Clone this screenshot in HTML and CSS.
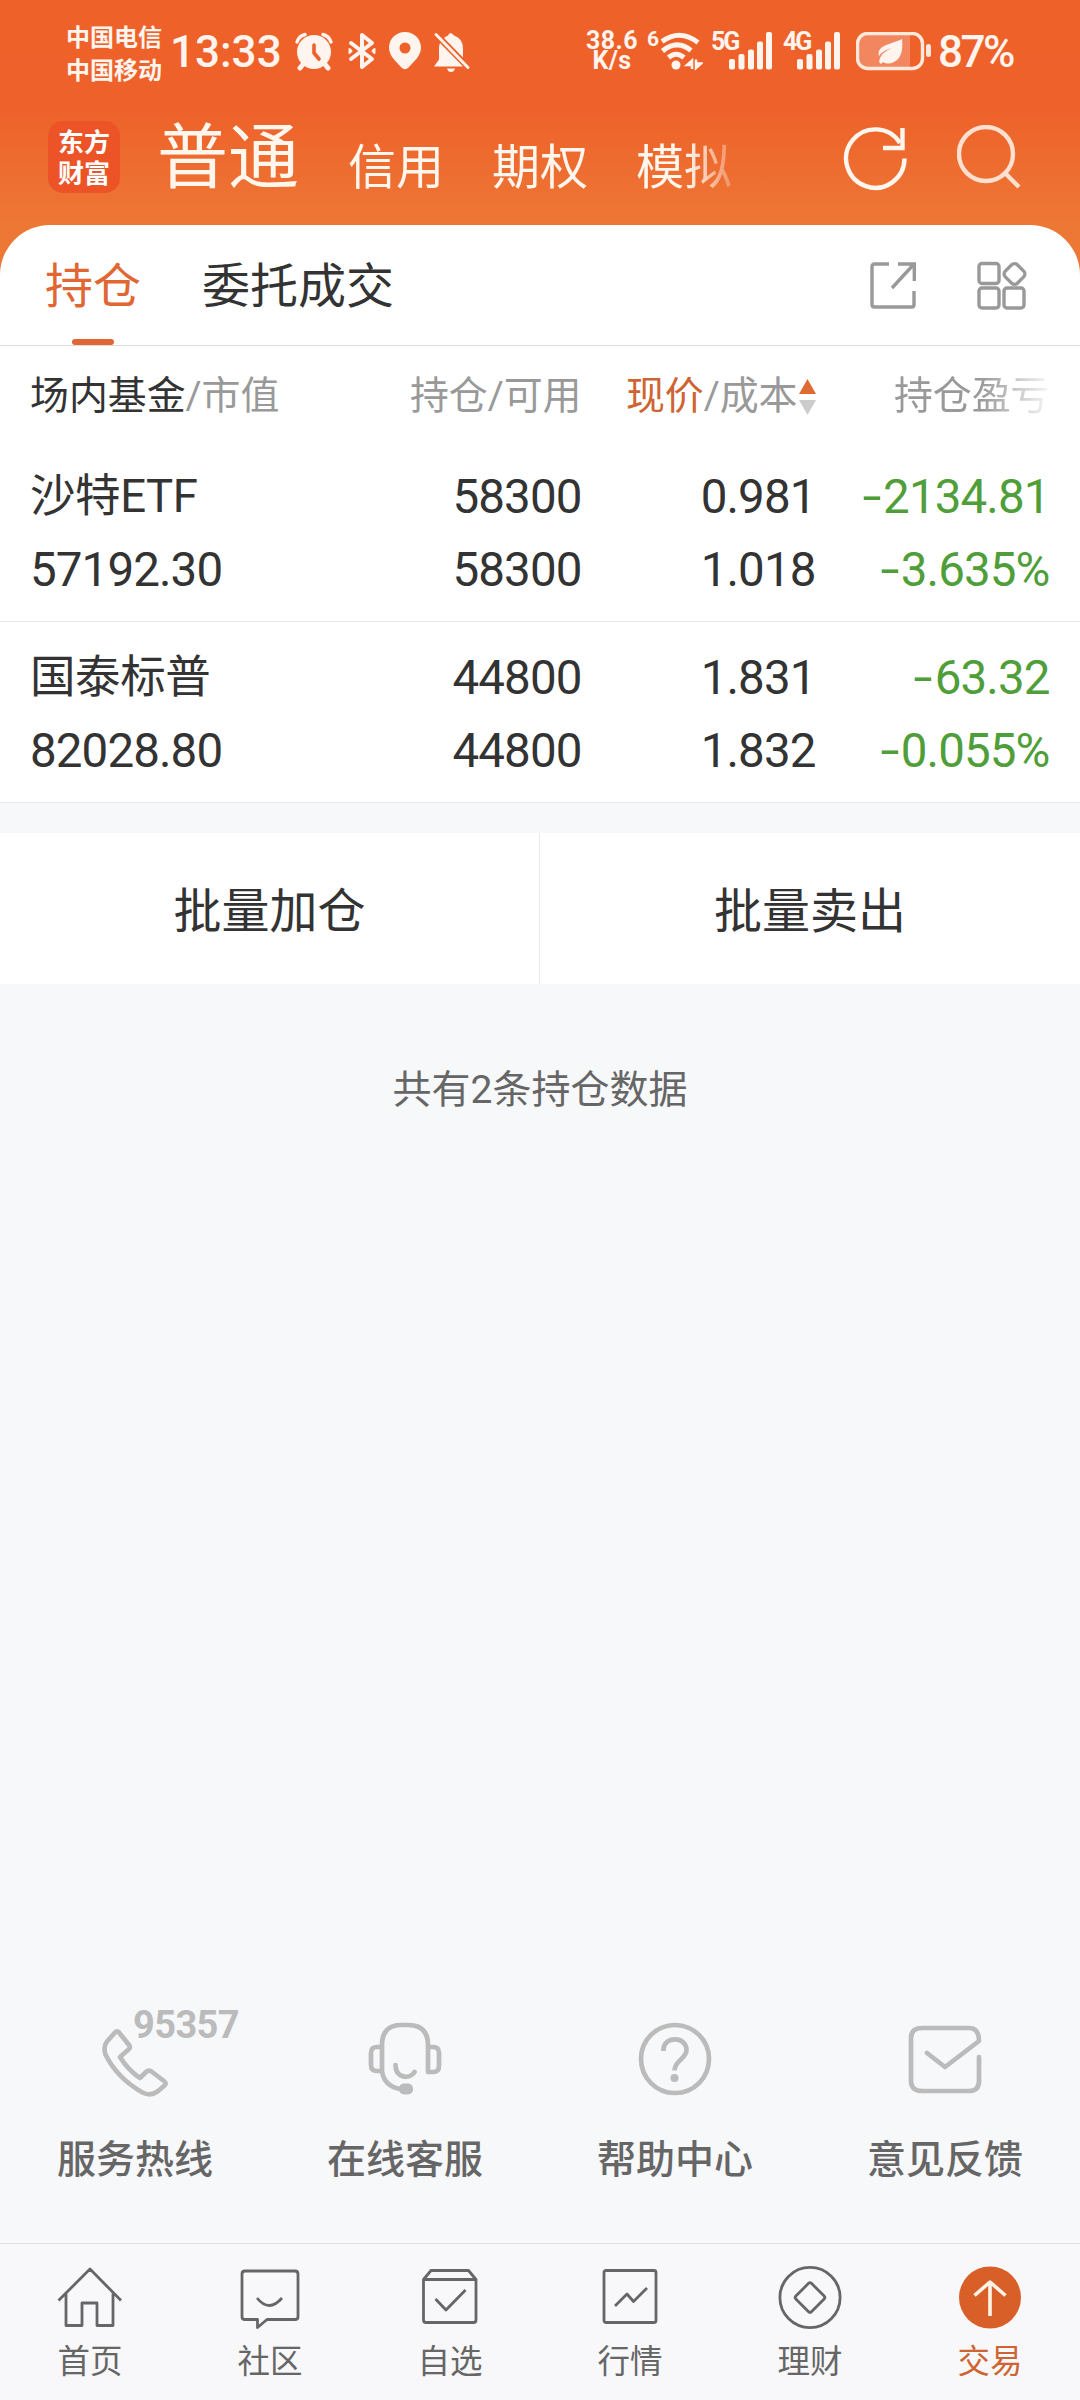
FILE: index.html
```html
<!DOCTYPE html>
<html lang="zh-CN">
<head>
<meta charset="utf-8">
<title>交易 - 持仓</title>
<link rel="stylesheet" href="styles.css">
</head>
<body>
<div class="app">
  <header class="top">
    <div class="status">
      <div class="carriers"><span>中国电信</span><span>中国移动</span></div>
      <div class="clock">13:33</div>
      <svg class="ic-alarm" width="38" height="40" viewBox="0 0 38 40" fill="#fff4ee">
        <circle cx="19" cy="21" r="17"/><path d="M9 32l-4 5M29 32l4 5" stroke="#fff4ee" stroke-width="5" stroke-linecap="round"/>
        <path d="M2 11Q4 5 10 3.500M36 11Q34 5 28 3.500" fill="none" stroke="#fff4ee" stroke-width="3.4" stroke-linecap="round"/>
        <path d="M19 14v8l5 6" fill="none" stroke="#ee622b" stroke-width="3.6" stroke-linecap="round"/>
      </svg>
      <svg class="ic-bt" width="30" height="40" viewBox="0 0 30 40" fill="none" stroke="#fff4ee" stroke-width="4" stroke-linejoin="round" stroke-linecap="round">
        <path d="M4 12l21 16-10 8V4l10 8L4 28"/><path d="M2.500 18v4l2-2zM27.500 18v4l-2-2z" stroke-width="2"/>
      </svg>
      <svg class="ic-pin" width="34" height="40" viewBox="0 0 34 40"><path fill="#fff4ee" fill-rule="evenodd" d="M17 1C8 1 1 8 1 16.500c0 8 6 13 12.500 20q3.500 3.500 7 0C27 29.500 33 24.500 33 16.500 33 8 26 1 17 1zm0 10.500a5.500 5.500 0 1 1 0 11 5.500 5.500 0 0 1 0-11z"/></svg>
      <svg class="ic-bell" width="38" height="42" viewBox="0 0 38 42" fill="#fff4ee">
        <path d="M1 35.500l5-7V17q0-3 1-5l23 23.500zM11 7q2-2 4-2.500 2-5 6 0 9 3 9 13v9zM14 37.500h8q-1 3.500-4 3.500t-4-3.500z"/>
        <path d="M3 3.500l32 33" stroke="#fff4ee" stroke-width="3" stroke-linecap="round"/>
      </svg>
      <div class="speed"><span>38.6</span><span>K/s</span></div>
      <div class="gen">6</div>
      <svg class="ic-wifi" width="43" height="40" viewBox="0 0 43 40" fill="none" stroke="#fff4ee" stroke-width="5">
        <path d="M2 10.500Q20 -2.500 38 11.500M2.500 20Q17 8 31 19.500"/><path d="M8.500 26.500Q16 20 24 26.500"/><circle cx="16" cy="34" r="4.500" fill="#fff4ee" stroke="none"/>
        <path d="M32 38V29.500l-5 4.500h5M36 28.500V37l5-4.500h-5" stroke-width="2.500"/>
      </svg>
      <div class="net net5">5G</div>
      <svg class="bars" width="44" height="40" viewBox="0 0 44 40" fill="#fff4ee"><rect y="27" width="6" height="10.500" rx="2"/><rect x="9.500" y="22" width="6" height="15.500" rx="2"/><rect x="19" y="17.500" width="6" height="20" rx="2"/><rect x="28" y="9.500" width="6" height="28" rx="2"/><rect x="37" y="0" width="6" height="37.500" rx="2"/></svg>
      <div class="net net4">4G</div>
      <svg class="bars bars4" width="44" height="40" viewBox="0 0 44 40" fill="#fff4ee"><rect y="27" width="6" height="10.500" rx="2"/><rect x="9.500" y="22" width="6" height="15.500" rx="2"/><rect x="19" y="17.500" width="6" height="20" rx="2"/><rect x="28" y="9.500" width="6" height="28" rx="2"/><rect x="37" y="0" width="6" height="37.500" rx="2"/></svg>
      <svg class="ic-batt" width="77" height="40" viewBox="0 0 77 40">
        <path d="M12 2h42v34H12Q3 34 3 27V11Q3 4 12 2z" fill="#f2875f"/>
        <rect x="1.500" y="1.500" width="65" height="35" rx="10" fill="none" stroke="#ffe9dd" stroke-width="3.400"/>
        <rect x="70" y="12" width="5" height="13" rx="2.500" fill="#ffe9dd"/>
        <path d="M46 7c1 10 0 19-8 23-4 2-8 2-11 0l-2 2-2-2c1-7 6-11 13-14-7 2-11 5-13 8-3-11 13-12 23-17z" fill="#fff4ee"/>
      </svg>
      <div class="pct">87%</div>
    </div>
    <div class="nav-top">
      <div class="logo"><span>东方</span><span>财富</span></div>
      <div class="accounts"><b>普通</b><span>信用</span><span>期权</span><span>模拟</span></div>
      <svg class="refresh" width="66" height="66" viewBox="0 0 66 66" fill="none" stroke="#fff6ee" stroke-width="4.400"><path d="M61.500 33.500A29.200 29.200 0 1 1 57 18"/><path d="M59.500 3v20H40"/></svg>
      <svg class="search" width="66" height="66" viewBox="0 0 66 66" fill="none" stroke="#fde0d0" stroke-width="4.400"><circle cx="29" cy="29" r="27"/><path d="M48 48l14 14"/></svg>
    </div>
  </header>

  <main>
    <div class="tabs">
      <div class="tab active">持仓</div><div class="tab">委托成交</div>
      <svg class="share" width="48" height="50" viewBox="0 0 48 50" fill="none" stroke="#999" stroke-width="3.400"><path d="M19 3H4.500Q2 3 2 5.500v38Q2 46 4.500 46H42q2 0 2-2.500V30M28 3h16.300v17M44 3L22 27"/></svg>
      <svg class="grid" width="50" height="50" viewBox="0 0 50 50" fill="none" stroke="#999" stroke-width="3.400"><rect x="2" y="2.500" width="20" height="20" rx="3"/><rect x="2" y="27" width="20" height="20" rx="3"/><rect x="27" y="27" width="20" height="20" rx="3"/><rect x="29" y="4.500" width="17" height="17" rx="4" transform="rotate(45 37.500 13)"/></svg>
    </div>

    <div class="row head">
      <div><em>场内基金</em>/市值</div>
      <div>持仓/可用</div>
      <div><i>现价</i>/成本<svg class="sort" width="17" height="36" viewBox="0 0 17 36"><path d="M8.500 0L17 15H0z" fill="#e06a33"/><path d="M0 21h17L8.500 36z" fill="#ccc"/></svg></div>
      <div class="fade">持仓盈亏</div>
    </div>
    <section class="holding">
      <div class="row"><div>沙特ETF</div><div>58300</div><div class="one">0.981</div><div class="down"><s>-</s>2134.81</div></div>
      <div class="row"><div>57192.30</div><div>58300</div><div>1.018</div><div class="down"><s>-</s>3.635%</div></div>
    </section>
    <section class="holding">
      <div class="row"><div>国泰标普</div><div>44800</div><div class="one">1.831</div><div class="down"><s>-</s>63.32</div></div>
      <div class="row"><div>82028.80</div><div>44800</div><div>1.832</div><div class="down"><s>-</s>0.055%</div></div>
    </section>
    <div class="batch"><button>批量加仓</button><button>批量卖出</button></div>
    <p class="count">共有2条持仓数据</p>
  </main>

  <div class="services">
    <a class="phone"><svg width="74" height="76" viewBox="0 0 74 76"><path d="M15 11.500Q17 9 19 11.500L29 24q2 2.500-.5 4.500L20 36q8 13 20 21l6-6q2.500-2.500 5.500-.5L64 60q3 2.500.5 4.500l-7 6q-7 5-15 1Q17 57 5.500 33.500q-2.500-8 1.500-13z"/></svg><small>95357</small><span>服务热线</span></a>
    <a><svg width="74" height="76" viewBox="0 0 74 76"><path d="M14 50V24Q14 4 33 4h7Q60 4 60 24v27h5q6 0 6-6V32q0-6-6-6h-5M14 26H9q-6 0-6 6v12q0 6 6 6h5q2 15 18 18M27.500 44c0 13 14 15 19 7"/><rect x="31" y="62.500" width="14" height="11" rx="5" class="solid"/></svg><span>在线客服</span></a>
    <a><svg width="74" height="76" viewBox="0 0 74 76"><circle cx="37" cy="38" r="34"/><path class="flat" d="M25.500 30V28.500C25.500 15 48.500 15 48.500 29c0 9-12 10-12 20.500"/><circle cx="36.500" cy="57" r="4" class="solid"/></svg><span>帮助中心</span></a>
    <a><svg width="74" height="76" viewBox="0 0 74 76"><path d="M71 36v24Q71 70 61 70H14Q3 70 3 60V17Q3 7 14 7H61Q71 7 71 20L37 46 19 32"/></svg><span>意见反馈</span></a>
  </div>

  <nav class="tabbar">
    <a><svg class="home" width="66" height="66" viewBox="0 0 66 66"><path d="M2.500 34.500L34 3l31 31.500M10 27.500V59.500H26V37h15v22.500H57V27.500"/></svg><span>首页</span></a>
    <a><svg width="66" height="66" viewBox="0 0 66 66"><path d="M8 5H58q3 0 3 3v43q0 2.500-3 2.500H30l-9.500 8V53.500H8q-3 0-3-2.500V8q0-3 3-3zM20 32q12 15 25 0"/></svg><span>社区</span></a>
    <a><svg width="66" height="66" viewBox="0 0 66 66"><path d="M14 4.500H51.500L59 13.500V54q0 2.500-2.500 2.500H9Q6.500 56.500 6.500 54V13.500zM6.500 13.500H59M18.500 33L29 44 48.500 24"/></svg><span>自选</span></a>
    <a><svg width="66" height="66" viewBox="0 0 66 66"><rect x="7" y="4.500" width="52" height="52" rx="2"/><path d="M18 40L30 28l6.500 7.500L50 22"/></svg><span>行情</span></a>
    <a><svg width="66" height="66" viewBox="0 0 66 66"><circle cx="33" cy="31.500" r="30.100"/><rect x="22" y="20.500" width="22" height="22" rx="2" transform="rotate(45 33 31.500)"/></svg><span>理财</span></a>
    <a class="on"><svg width="66" height="66" viewBox="0 0 66 66"><circle cx="33" cy="31.500" r="31" class="disc"/><path d="M33 50V16M17.500 29.500L33 16l15.500 13.500" stroke="#fff4e6" stroke-width="3.600"/></svg><span>交易</span></a>
  </nav>
</div>
</body>
</html>
```
FILE: styles.css
```css
* { box-sizing: border-box; margin: 0; padding: 0; }
body { font-family: Roboto, "Noto Sans CJK SC", sans-serif; background: #f7f8fa; color: #333; }
.app { width: 1080px; height: 2400px; display: flex; flex-direction: column; background: #f7f8fa; }
svg { display: block; flex: none; }
em, i { font-style: normal; }

.top { height: 275px; flex: none; color: #fff6ee; background: linear-gradient(#ee622a 0, #ee612a 105px, #ed7735 225px, #ed7735 100%); }
.status { height: 105px; display: flex; align-items: flex-start; color: #fff4ee; padding: 0 0 0 66px; }
.status > * { flex: none; }
.carriers { width: 96px; margin: 22px 8px 0 0; display: flex; flex-direction: column; font-size: 24px; font-weight: 700; line-height: 33px; white-space: nowrap; }
.clock { width: 114px; margin: 26px 11px 0 0; font-size: 44px; font-weight: 500; line-height: 52px; letter-spacing: 0; }
.ic-alarm, .ic-bt, .ic-pin { margin-top: 31px; }
.ic-bt { margin-left: 14px; }
.ic-pin { margin-left: 11px; }
.ic-bell { margin: 31px 0 0 11px; }
.speed { width: 54px; margin: 31px 0 0 114px; display: flex; flex-direction: column; align-items: center; font-size: 25px; font-weight: 700; line-height: 20px; letter-spacing: .4px; }
.gen { width: 13px; margin: 27px 0 0 8px; font-size: 21px; font-weight: 700; line-height: 24px; }
.ic-wifi { margin-top: 31px; }
.net { width: 18px; margin-top: 27px; font-size: 25px; font-weight: 700; line-height: 30px; letter-spacing: -2px; }
.net5 { margin-left: 8px; }
.bars { margin-top: 32px; }
.net4 { width: 14px; margin-left: 10px; }
.ic-batt { margin: 32px 0 0 15px; }
.pct { margin: 26px 0 0 5px; font-size: 44px; font-weight: 500; line-height: 52px; letter-spacing: -2.5px; }

.nav-top { height: 120px; display: flex; align-items: flex-start; padding-left: 48px; }
.logo { width: 72px; height: 72px; margin-top: 16px; padding-bottom: 3px; border-radius: 15px; background: #ec5428; display: flex; flex-direction: column; align-items: center; justify-content: center; font: 700 26px/31px "Noto Sans CJK SC", sans-serif; color: #fff; }
.accounts { width: 612px; height: 100px; margin-left: 37px; display: flex; align-items: flex-start; font-size: 48px; line-height: 126px; white-space: nowrap; mask-image: linear-gradient(90deg, #000 530px, transparent 590px); }
.accounts b { font-weight: 400; font-size: 71px; line-height: 106px; margin-right: 49px; }
.accounts span { margin-right: 48px; }
.refresh { margin: 20px 0 0 74px; }
.search { margin: 20px 0 0 48px; }

main { flex: none; height: 1000px; margin-top: -50px; display: flex; flex-direction: column; }
.tabs { height: 121px; display: flex; align-items: flex-start; padding-left: 45px; background: #fff; border-radius: 50px 50px 0 0; border-bottom: 1px solid #dcdcdc; }
.tab { font-size: 48px; line-height: 123px; height: 120px; margin-right: 61px; }
.tab.active { color: #e06734; position: relative; }
.tab.active::after { content: ""; position: absolute; left: 27px; bottom: 0; width: 42px; height: 6px; border-radius: 3px; background: #e06734; }
.share { margin: 36px 0 0 auto; }
.grid { margin: 36px 53px 0 59px; }

.row { display: grid; grid-template-columns: 300px 251.5px 234px 234px; padding-left: 30px; font-size: 47.5px; line-height: 72px; height: 73px; letter-spacing: -.9px; white-space: nowrap; }
.row > div:not(:first-child) { text-align: right; }
.row.head { height: 95px; background: #fff; font-size: 38.9px; line-height: 99px; letter-spacing: 0; color: #999; }
.head em { color: #333; }
.head i { color: #cf6433; }
.row.head > div:nth-child(3) { display: flex; justify-content: flex-end; align-items: center; }
.sort { margin: 2px 0 0 1px; }
.fade { mask-image: linear-gradient(90deg, #000 165px, transparent 240px); }
.holding { height: 181px; padding-top: 20px; background: #fff; border-bottom: 1px solid #ebebeb; }
.holding .row > div:first-child { font-size: 45.5px; letter-spacing: -.4px; }
.holding .row:nth-child(2) > div:first-child { font-size: 47.5px; letter-spacing: -.9px; }
.down { color: #4f9e3a; }
.down s { display: inline-block; text-decoration: none; transform: scaleX(1.45); transform-origin: right; margin-right: 3px; }

.batch { height: 151px; margin-top: 30px; display: grid; grid-template-columns: 540px 540px; }
.batch button { border: 0; background: #fff; color: #333; font: 48px/151px Roboto, "Noto Sans CJK SC", sans-serif; padding-top: 3px; height: 151px; overflow: hidden; }
.batch button:first-child { border-right: 1px solid #eaeaea; }
.count { margin-top: 80px; text-align: center; font-size: 39px; line-height: 53px; color: #666; }

.services { height: 243px; margin-top: auto; display: grid; grid-template-columns: repeat(4, 1fr); }
.services a { display: flex; flex-direction: column; align-items: center; padding-top: 21px; font-size: 39px; line-height: 54px; color: #666; font-weight: 500; position: relative; }
.services svg { fill: none; stroke: #bbb; stroke-width: 4.7; stroke-linejoin: round; stroke-linecap: round; }
.services .phone svg { margin-left: 4px; }
.services .solid { fill: #bbb; stroke: none; }
.services .flat { stroke-linecap: butt; }
.services span { margin-top: 36px; }
.services small { position: absolute; left: 133px; top: 3px; font-size: 38px; line-height: 44px; font-weight: 700; color: #bbb; letter-spacing: -.6px; }

.tabbar { height: 157px; flex: none; display: grid; grid-template-columns: repeat(6, 1fr); border-top: 1px solid #e0e0e0; background: #f8f8fa; }
.tabbar a { display: flex; flex-direction: column; align-items: center; padding-top: 22px; font-size: 32.5px; line-height: 44px; color: #666; }
.tabbar svg { fill: none; stroke: #666; stroke-width: 2.8; stroke-linejoin: round; margin-right: 1px; }
.tabbar .home { margin-right: 3px; }
.tabbar .disc { fill: #d86028; stroke: none; }
.tabbar span { margin-top: 8px; }
.tabbar .on { color: #cf6433; }
```
